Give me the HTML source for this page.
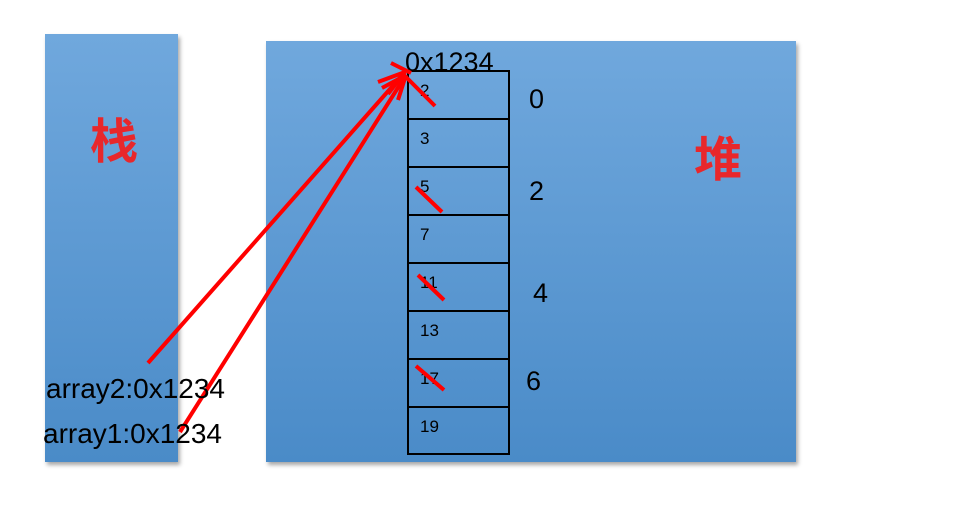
<!DOCTYPE html>
<html><head><meta charset="utf-8"><style>
body{margin:0;width:971px;height:516px;background:#fff;position:relative;overflow:hidden;font-family:"Liberation Sans",sans-serif}
.p{position:absolute;background:linear-gradient(#70a8dd,#4a8bc8);box-shadow:2px 3px 4px rgba(0,0,0,.35)}
.t{position:absolute;color:#000;white-space:nowrap}
.c{position:absolute;font-weight:bold;color:#e8272b;font-size:48px;font-family:"Liberation Sans","Noto Sans CJK SC",sans-serif}
</style></head><body>
<div class="p" style="left:45px;top:34px;width:133px;height:428px"></div>
<div class="p" style="left:266px;top:41px;width:530px;height:421px"></div>
<div class="c" style="left:90px;top:102px">栈</div>
<div class="c" style="left:694px;top:120px">堆</div>
<svg style="position:absolute;left:0;top:0" width="971" height="516">
<g fill="none" stroke="#000" stroke-width="2">
<rect x="408" y="71" width="101" height="383"/>
<path d="M408 119H509M408 167H509M408 215H509M408 263H509M408 311H509M408 359H509M408 407H509"/>
</g>
<g font-family="Liberation Sans" font-size="17" fill="#000">
<text x="420" y="96">2</text><text x="420" y="144">3</text><text x="420" y="192">5</text><text x="420" y="240">7</text>
<text x="420" y="288">11</text><text x="420" y="336">13</text><text x="420" y="384">17</text><text x="420" y="432">19</text>
</g>
<g font-family="Liberation Sans" font-size="27" fill="#000">
<text x="529" y="108">0</text><text x="529" y="200">2</text><text x="533" y="302">4</text><text x="526" y="390">6</text>
<text x="405" y="71" font-size="27">0x1234</text>
</g>
<g stroke="#f00" stroke-width="4" fill="none" stroke-linecap="butt">
<path d="M148 363L405 72M180 432L406 75"/>
<path d="M405 72L378 82M405 72L388 94M406 75L398 100M406 75L382 88"/>
<path d="M391 63L411 73M404 75L435 106M416 187L442 212M418 275L444 300M416 366L444 390"/>
</g>
</svg>
<div class="t" style="left:46px;top:373px;font-size:28px">array2:0x1234</div>
<div class="t" style="left:43px;top:418px;font-size:28px">array1:0x1234</div>
</body></html>
